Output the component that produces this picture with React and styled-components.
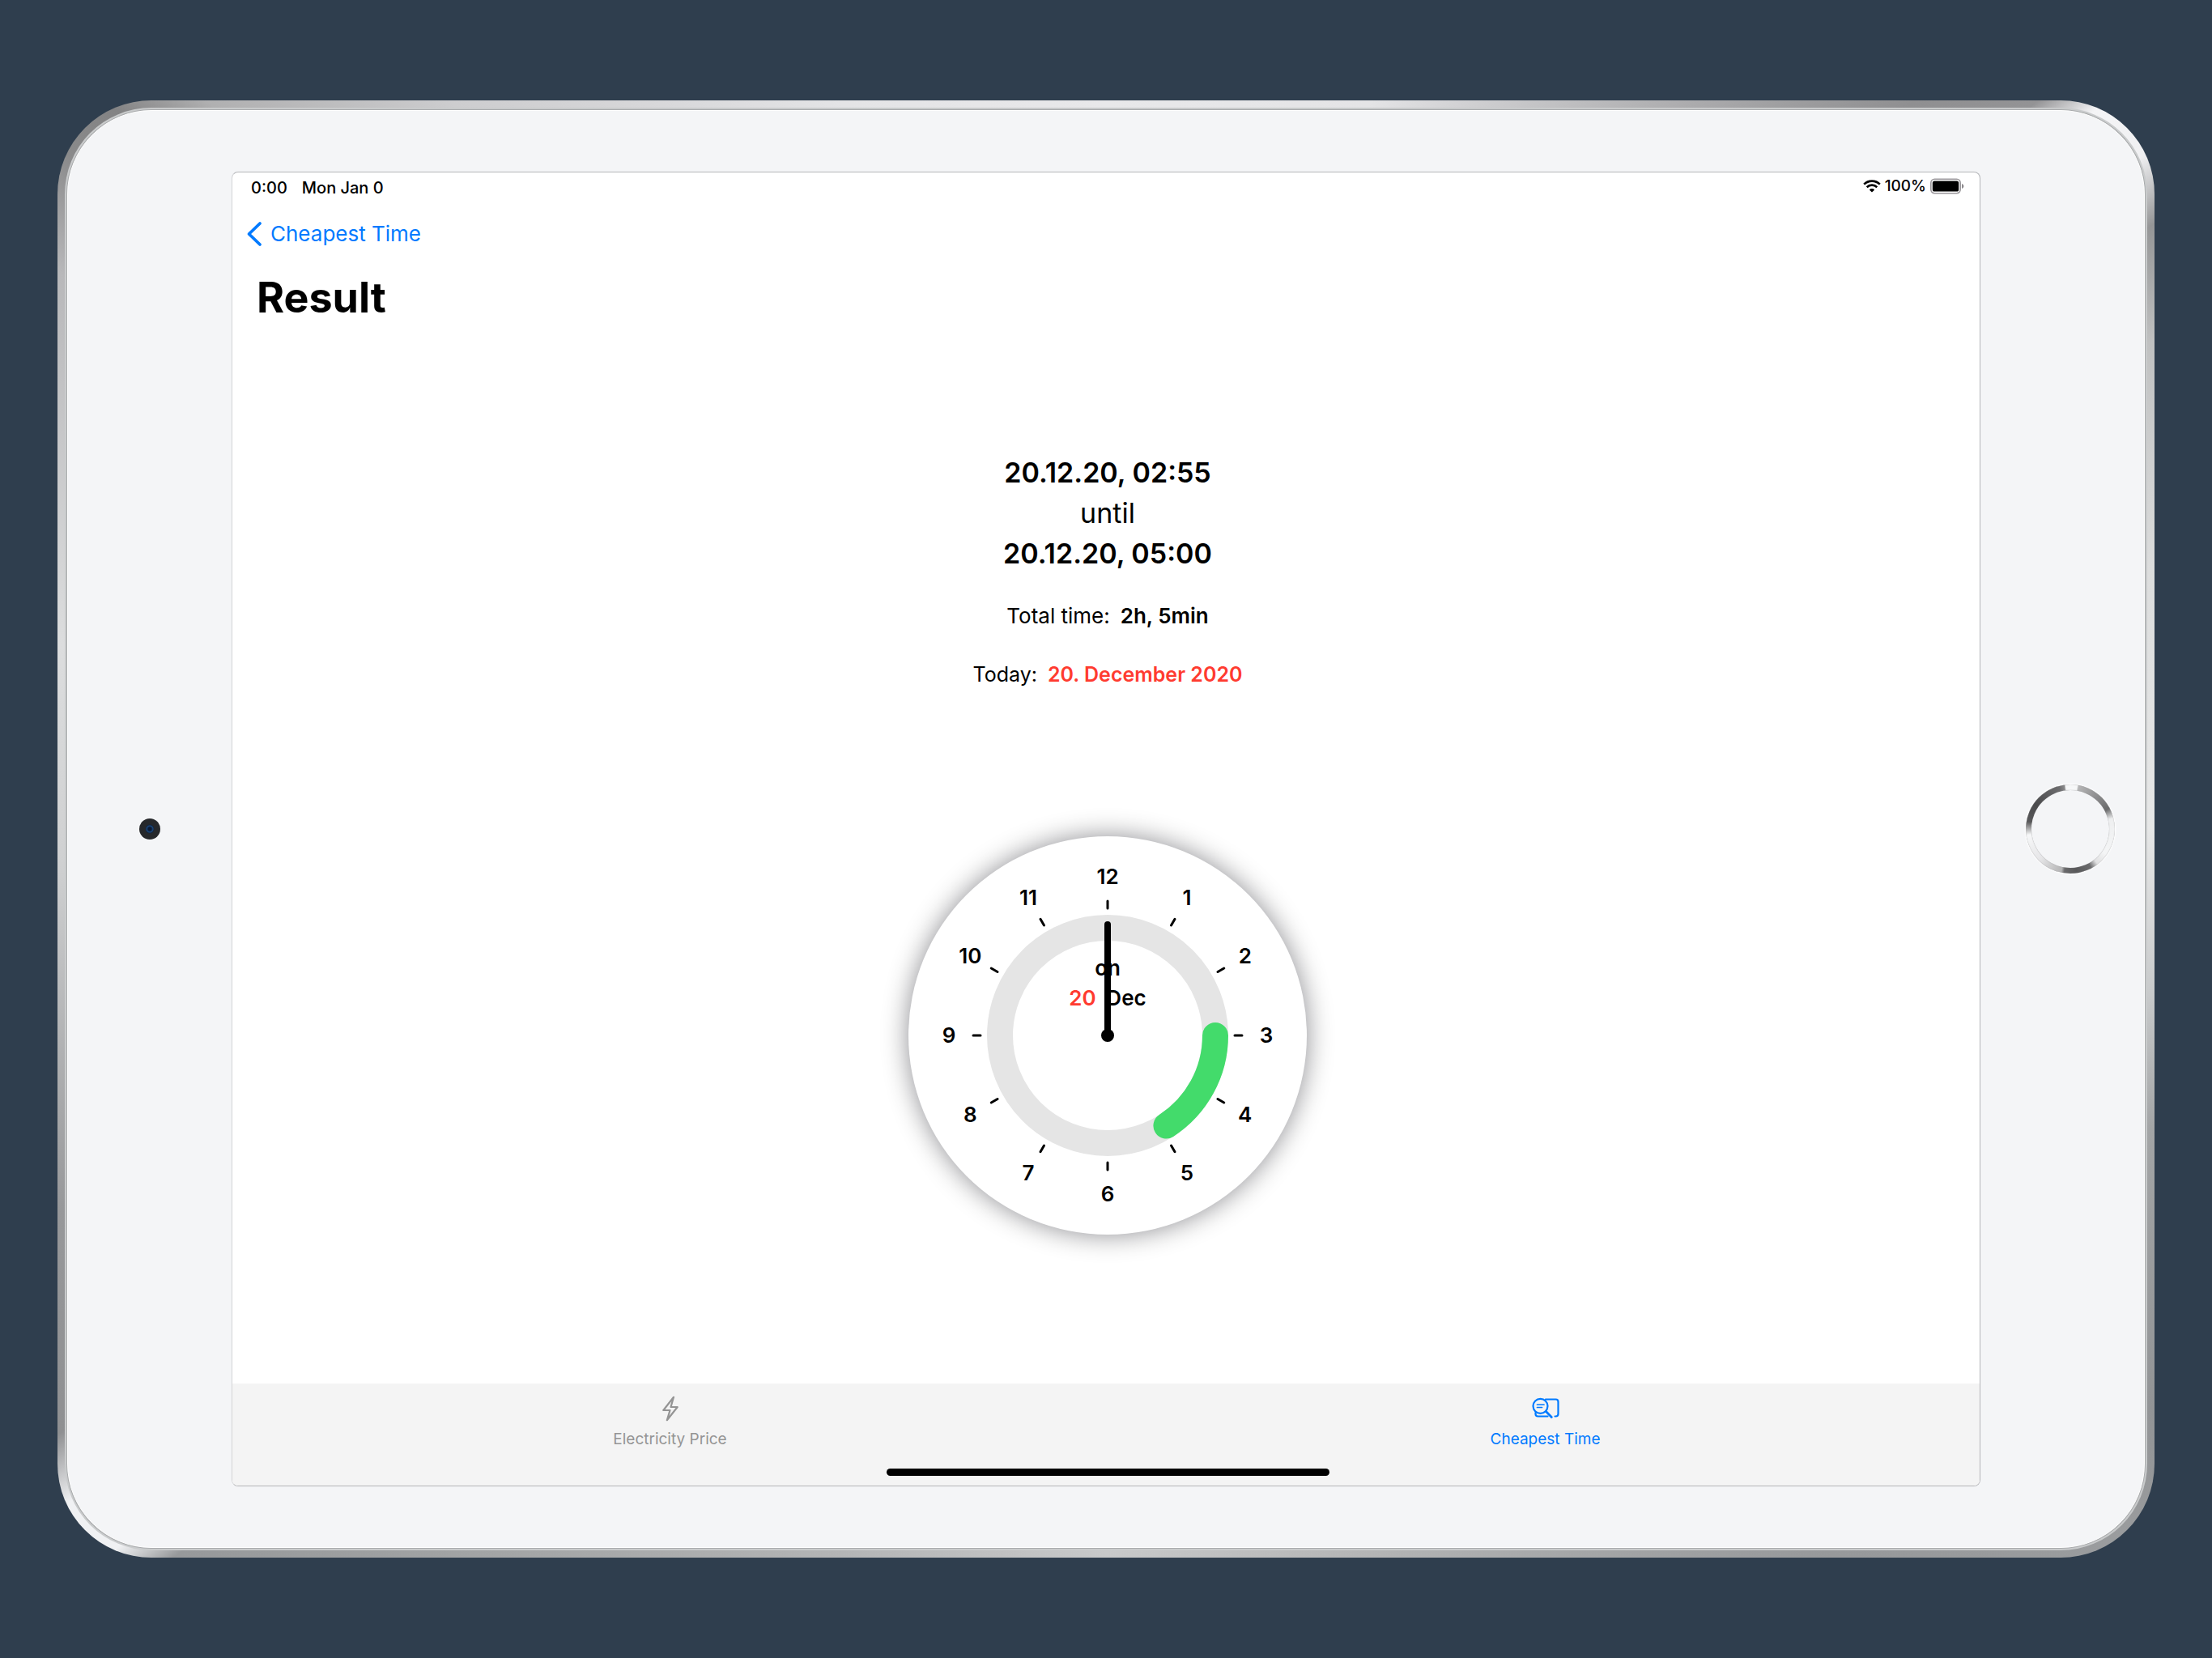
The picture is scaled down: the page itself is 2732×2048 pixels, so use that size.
import React from "react";
import styled, { createGlobalStyle } from "styled-components";

const GlobalStyle = createGlobalStyle`
  *, *::before, *::after { box-sizing: border-box; }
  html, body { margin: 0; padding: 0; background: #2f3e4e; }
  body, button { font-family: Inter, "Liberation Sans", Arial, sans-serif; }
`;

const Stage = styled.div`
  display: flex;
  min-height: 100vh;
  padding: 124px 71px;
  background: #2f3e4e;
`;

const Device = styled.div`
  flex: 1;
  display: flex;
  padding: 9px;
  border-radius: 116px;
  background: conic-gradient(
    #e8e8ea 0deg,
    #e4e4e6 20deg,
    #a8a8aa 40deg,
    #8f8f91 48deg,
    #939395 52deg,
    #f4f4f6 54deg,
    #f0f0f2 57deg,
    #959697 60deg,
    #c0c1c1 65deg,
    #dcdddd 76deg,
    #e6e7e7 90deg,
    #c8cacb 99deg,
    #a3a5a6 106deg,
    #929496 119deg,
    #9a9c9e 125deg,
    #97999b 135deg,
    #b4b5b6 160deg,
    #c8c9ca 180deg,
    #b4b5b6 200deg,
    #a3a5a6 220deg,
    #97999b 232deg,
    #f0f1f3 234deg,
    #f0f1f3 237deg,
    #8f9092 240deg,
    #97989a 250deg,
    #cfd0d1 268deg,
    #dcddde 280deg,
    #b8b8ba 298deg,
    #8a8a8b 303deg,
    #838384 306deg,
    #b0b0b1 309deg,
    #cdcdcf 318deg,
    #e4e4e6 340deg,
    #e8e8ea 360deg
  );
`;

const Lip = styled.div`
  flex: 1;
  display: flex;
  padding: 3px;
  border-radius: 107px;
  background: #c9cbcc;
`;

const Face = styled.div`
  flex: 1;
  display: flex;
  border: 1px solid #ffffff;
  border-radius: 104px;
  background: #f4f5f7;
  box-shadow: 0 0 0 1px #a9abad;
  overflow: hidden;
`;

const Bezel = styled.div`
  flex: 0 0 202px;
  display: flex;
  align-items: center;
  justify-content: ${(p) => (p.$end ? "flex-end" : "center")};
  padding-right: ${(p) => (p.$end ? "36px" : "0")};
`;

const Camera = styled.div`
  width: 26px;
  height: 26px;
  border-radius: 50%;
  background: radial-gradient(circle, #0b1a33 0 2px, #1c4a80 4px, #15243a 5px, #26282b 6px);
`;

const HomeButton = styled.button`
  width: 110px;
  height: 110px;
  padding: 7px;
  border: 0;
  border-radius: 50%;
  background: conic-gradient(
    #f6f7f8 0deg 9deg,
    #b5b5b6 11deg,
    #8c8c8d 40deg,
    #6a6a6b 62deg,
    #eeeff0 76deg,
    #f4f5f6 125deg,
    #e0e0e1 142deg,
    #6a6a6c 152deg,
    #58585a 172deg,
    #6a6a6c 188deg,
    #b4b4b5 192deg,
    #e6e6e8 225deg,
    #f6f7f8 262deg,
    #b0b0b1 270deg,
    #58585a 280deg,
    #4a4a4c 305deg,
    #6c6c6e 345deg,
    #8a8a8b 352deg,
    #f6f7f8 354deg 360deg
  );
  box-shadow: 0 0 2px 1px #ffffff, inset 0 0 1px #9a9a9c;

  &::before {
    content: "";
    display: block;
    height: 96px;
    border-radius: 50%;
    background: #f4f5f7;
    box-shadow: 0 0 1px #8e8e90;
  }
`;

const Screen = styled.div`
  flex: 1;
  display: flex;
  margin: 75px 0;
  border: 1px solid #b4b5b8;
  border-left-color: #d3d4d6;
  border-radius: 8px;
  background: #ffffff;
  overflow: hidden;
`;

/* The view is slightly wider than the glass that shows it. */
const View = styled.div`
  flex: 1;
  display: flex;
  flex-direction: column;
  margin-right: -4px;
  color: #000000;
`;

const StatusBar = styled.div`
  display: flex;
  justify-content: space-between;
  height: 39px;
  padding: 0 23px;
  font-size: 20px;
  font-weight: 500;
  line-height: 39px;
`;

const StatusGroup = styled.div`
  display: flex;
  gap: ${(p) => p.$gap};
`;

const StatusIcons = styled(StatusGroup)`
  align-items: center;
  height: 34px;
  font-size: 19px;
  line-height: 34px;
`;

const NavBar = styled.nav`
  display: flex;
  align-items: center;
  height: 74px;
  padding: 0 17px;
`;

const BackButton = styled.button`
  display: flex;
  align-items: center;
  gap: 10px;
  padding: 0;
  border: 0;
  background: none;
  color: #007aff;
  font-size: 26px;
  line-height: 32px;
`;

const Title = styled.h1`
  margin: 10px 30px 0;
  font-size: 52px;
  font-weight: 700;
  line-height: 64px;
`;

const Main = styled.main`
  flex: 1;
  display: flex;
  flex-direction: column;
  align-items: center;
  justify-content: center;
  padding-bottom: 26px;
`;

const Moment = styled.p`
  margin: 0;
  font-size: 34px;
  font-weight: ${(p) => (p.$strong ? 600 : 400)};
  line-height: 50px;
`;

const Fact = styled.p`
  display: flex;
  gap: 13px;
  margin: ${(p) => (p.$small ? "40px 0 0" : "36px 0 0")};
  font-size: ${(p) => (p.$small ? "25px" : "26px")};
  line-height: 32px;
`;

const Value = styled.strong`
  color: ${(p) => p.$color || "inherit"};
  font-weight: 600;
`;

const ClockFace = styled.div`
  width: 492px;
  height: 492px;
  margin-top: 184px;
  border-radius: 50%;
  background: #ffffff;
  box-shadow: 0 0 32px rgba(0, 0, 10, 0.45);

  svg { display: block; }
  text { font-family: Inter, "Liberation Sans", Arial, sans-serif; font-size: 26px; font-weight: 600; }
`;

const TabBar = styled.nav`
  display: flex;
  flex-wrap: wrap;
  align-content: flex-start;
  justify-content: center;
  height: 126px;
  background: #f4f4f4;
`;

const Tab = styled.button`
  flex: 0 0 50%;
  display: flex;
  flex-direction: column;
  align-items: center;
  height: 100px;
  padding: 15px 0 0;
  border: 0;
  background: none;
  color: ${(p) => (p.$active ? "#007aff" : "#949494")};
  font-size: 19px;
  line-height: 24px;

  svg { margin-bottom: 10px; }
`;

const HomeBar = styled.div`
  width: 547px;
  height: 9px;
  margin-top: 5px;
  border-radius: 5px;
  background: #000000;
`;

const WifiIcon = () => (
  <svg width="22" height="16" viewBox="0 0 22 16" fill="none" stroke="#000" strokeWidth="2.6" aria-hidden="true">
    <path d="M1.2 5.6a14 14 0 0 1 19.6 0" />
    <path d="M4.7 9.2a9 9 0 0 1 12.6 0" />
    <path d="M11 15.6 7.8 12.4a4.5 4.5 0 0 1 6.4 0Z" fill="#000" stroke="none" />
  </svg>
);

const BatteryIcon = () => (
  <svg width="42" height="20" viewBox="0 0 42 20" aria-hidden="true">
    <rect x="0.8" y="1.3" width="36.4" height="17.4" rx="4.6" fill="none" stroke="#9a979b" strokeWidth="1.6" />
    <rect x="2.8" y="3.4" width="32.4" height="13.2" rx="2.6" fill="#000" />
    <path d="M39 7v6c1.5-.6 2.4-1.7 2.4-3S40.500 7.600 39 7Z" fill="#8d8a8e" />
  </svg>
);

const ChevronIcon = () => (
  <svg width="20" height="32" viewBox="0 0 20 32" fill="none" stroke="currentColor" strokeWidth="3.8" strokeLinecap="round" strokeLinejoin="round" aria-hidden="true">
    <path d="M17 3 3.500 16 17 29" />
  </svg>
);

const BoltIcon = () => (
  <svg width="20" height="32" viewBox="0 0 20 32" fill="none" stroke="currentColor" strokeWidth="2.2" strokeLinejoin="round" aria-hidden="true">
    <path d="M14 1.800 1.300 18h8.200L5.800 30.200 18.700 14h-8.200Z" />
  </svg>
);

const SearchCardIcon = () => (
  <svg width="34" height="32" viewBox="0 0 34 32" fill="none" stroke="currentColor" strokeWidth="2.2" strokeLinecap="round" aria-hidden="true">
    <path d="M17 4.500h12.500a3 3 0 0 1 3 3V22.500a3 3 0 0 1-3 3H28.500" />
    <path d="M4.500 21v1.500a3 3 0 0 0 3 3H19.500" />
    <circle cx="10.500" cy="12.800" r="9" />
    <path d="M6.500 11h8.500M6.500 14.500h6" strokeWidth="1.700" />
    <path d="M17.500 19.500 24.300 26.500" strokeWidth="2.800" />
  </svg>
);

const HOURS = Array.from({ length: 12 }, (_, i) => i + 1);

const point = (degrees, radius) => {
  const a = (degrees * Math.PI) / 180;
  return { x: Math.sin(a) * radius, y: -Math.cos(a) * radius };
};

function Clock({ from, to }) {
  const start = point(from, 133);
  const end = point(to, 133);
  return (
    <ClockFace>
      <svg width="492" height="492" viewBox="-246 -246 492 492" textAnchor="middle">
        <circle r="133" fill="none" stroke="#e5e5e5" strokeWidth="32" />
        <path
          d={`M${start.x} ${start.y}A133 133 0 0 1 ${end.x} ${end.y}`}
          fill="none"
          stroke="#43db6b"
          strokeWidth="32"
          strokeLinecap="round"
        />
        {HOURS.map((hour) => {
          const inner = point(hour * 30, 157);
          const outer = point(hour * 30, 166);
          const label = point(hour * 30, 196);
          return (
            <g key={hour}>
              <line x1={inner.x} y1={inner.y} x2={outer.x} y2={outer.y} stroke="#000" strokeWidth="3" strokeLinecap="round" />
              <text x={label.x} y={label.y + 9}>{hour}</text>
            </g>
          );
        })}
        <text y="-74">on</text>
        <text x="-31" y="-37" fill="#ff3b30">20</text>
        <text x="23" y="-37">Dec</text>
        <line y1="-137" y2="0" stroke="#000" strokeWidth="8" strokeLinecap="round" />
        <circle r="8" />
      </svg>
    </ClockFace>
  );
}

export default function App() {
  return (
    <>
      <GlobalStyle />
      <Stage>
        <Device>
          <Lip>
            <Face>
              <Bezel>
                <Camera />
              </Bezel>
              <Screen>
                <View>
                  <StatusBar>
                    <StatusGroup $gap="18px">
                      <span>0:00</span>
                      <span>Mon Jan 0</span>
                    </StatusGroup>
                    <StatusIcons $gap="5px">
                      <WifiIcon />
                      <span>100%</span>
                      <BatteryIcon />
                    </StatusIcons>
                  </StatusBar>
                  <NavBar>
                    <BackButton type="button">
                      <ChevronIcon />
                      Cheapest Time
                    </BackButton>
                  </NavBar>
                  <Title>Result</Title>
                  <Main>
                    <Moment $strong>20.12.20, 02:55</Moment>
                    <Moment>until</Moment>
                    <Moment $strong>20.12.20, 05:00</Moment>
                    <Fact>
                      Total time: <Value>2h, 5min</Value>
                    </Fact>
                    <Fact $small>
                      Today: <Value $color="#ff3b30">20. December 2020</Value>
                    </Fact>
                    <Clock from={90} to={147} />
                  </Main>
                  <TabBar>
                    <Tab type="button">
                      <BoltIcon />
                      Electricity Price
                    </Tab>
                    <Tab type="button" $active>
                      <SearchCardIcon />
                      Cheapest Time
                    </Tab>
                    <HomeBar />
                  </TabBar>
                </View>
              </Screen>
              <Bezel $end>
                <HomeButton type="button" aria-label="Home" />
              </Bezel>
            </Face>
          </Lip>
        </Device>
      </Stage>
    </>
  );
}
